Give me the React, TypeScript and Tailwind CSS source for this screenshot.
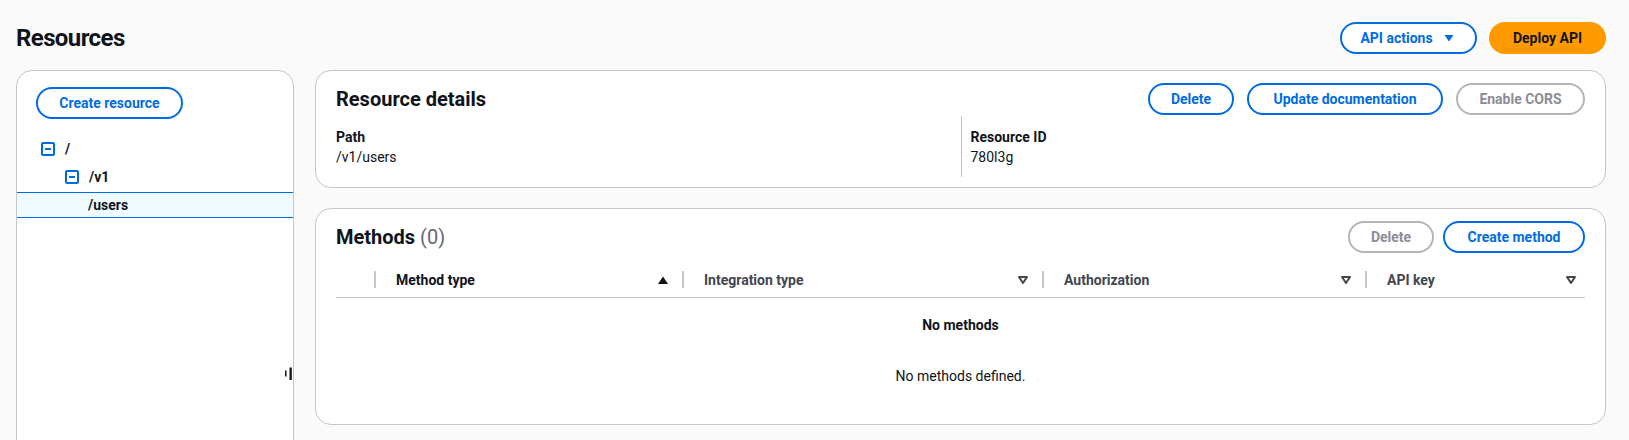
import type { ReactNode } from "react";

type Variant = "normal" | "primary" | "disabled";

const variants: Record<Variant, string> = {
  normal: "border-[#006ce0] bg-white text-[#006ce0]",
  primary: "border-[#ff9900] bg-[#ff9900] text-[#0f141a]",
  disabled: "border-[#b4b4bb] bg-white text-[#8c8c94]",
};

const Button = ({
  children,
  variant = "normal",
  width,
}: {
  children: ReactNode;
  variant?: Variant;
  width: string;
}) => (
  <button
    className={`flex h-8 shrink-0 items-center justify-center gap-2 rounded-full border-2 text-sm font-bold leading-5 ${width} ${variants[variant]}`}
  >
    {children}
  </button>
);

// small +/- box used by the resource tree
const Toggle = () => (
  <span className="flex h-[14px] w-[14px] shrink-0 items-center justify-center rounded-[2px] border-2 border-[#006ce0]">
    <span className="h-[2px] w-[6px] bg-[#006ce0]" />
  </span>
);

const SortUp = () => (
  <svg width="16" height="16" viewBox="0 0 16 16" className="shrink-0">
    <polygon points="3,12 13,12 8,4.5" fill="#0f141a" />
  </svg>
);

const SortNone = () => (
  <svg width="16" height="16" viewBox="0 0 16 16" className="shrink-0">
    <polygon
      points="4,5 12,5 8,11"
      fill="none"
      stroke="#424650"
      strokeWidth="2"
      strokeLinejoin="round"
    />
  </svg>
);

const Caret = () => (
  <svg width="16" height="16" viewBox="0 0 16 16" className="shrink-0">
    <polygon points="3.5,5 12.5,5 8,11.5" fill="#006ce0" />
  </svg>
);

const columns = [
  { label: "Method type", width: "w-[308px]", pr: "pr-[11px]", sorted: true },
  { label: "Integration type", width: "w-[360px]", pr: "pr-[11px]", sorted: false },
  { label: "Authorization", width: "w-[323px]", pr: "pr-[11px]", sorted: false },
  { label: "API key", width: "flex-1", pr: "pr-[6px]", sorted: false },
];

const App = () => {
  return (
    <div className="min-h-screen bg-[#fafafa] pl-4 pr-[23px] pt-[22px] font-[Roboto,sans-serif] text-[#0f141a]">
      {/* HEADER */}
      <header className="flex items-center justify-between">
        <h1 className="text-2xl font-bold leading-8 tracking-[-0.6px]">Resources</h1>
        <div className="flex gap-3">
          <Button width="w-[137px]">
            API actions
            <Caret />
          </Button>
          <Button width="w-[117px]" variant="primary">
            Deploy API
          </Button>
        </div>
      </header>

      <div className="mt-4 flex items-start gap-[21px]">
        {/* TREE PANEL */}
        <aside className="relative h-[400px] w-[278px] shrink-0 rounded-t-2xl border border-[#c6c6cd] bg-white pt-4">
          <div className="pl-[19px]">
            <Button width="w-[147px]">Create resource</Button>
          </div>
          <div className="mt-4 text-sm font-bold leading-5">
            <div className="flex h-7 items-center gap-[10px] pl-6">
              <Toggle />
              <span>/</span>
            </div>
            <div className="flex h-7 items-center gap-[10px] pl-12">
              <Toggle />
              <span>/v1</span>
            </div>
            <div className="mt-[1px] flex h-[26px] items-center border-y border-[#006ce0] bg-[#f0fbff] pl-[71px]">
              /users
            </div>
          </div>
          <svg width="8" height="14" viewBox="0 0 8 14" className="absolute left-[268px] top-[296px]">
            <rect x="0" y="3.5" width="1.5" height="6" fill="#0f141a" />
            <rect x="4.5" y="0.5" width="2.3" height="12.5" fill="#0f141a" />
          </svg>
        </aside>

        <main className="flex flex-1 flex-col gap-5">
          {/* RESOURCE DETAILS */}
          <section className="rounded-2xl border border-[#c6c6cd] bg-white">
            <div className="flex items-center justify-between px-5 pt-3">
              <h2 className="text-xl font-bold leading-6">Resource details</h2>
              <div className="flex gap-[13px]">
                <Button width="w-[86px]">Delete</Button>
                <Button width="w-[196px]">Update documentation</Button>
                <Button width="w-[129px]" variant="disabled">
                  Enable CORS
                </Button>
              </div>
            </div>
            <div className="mt-[1px] grid grid-cols-2 px-5 pb-[10px] text-sm leading-5">
              <div className="pb-[10px] pt-[11px]">
                <div className="font-bold">Path</div>
                <div>/v1/users</div>
              </div>
              <div className="border-l border-[#c6c6cd] pb-[10px] pl-[9px] pt-[11px]">
                <div className="font-bold">Resource ID</div>
                <div>780l3g</div>
              </div>
            </div>
          </section>

          {/* METHODS */}
          <section className="rounded-2xl border border-[#c6c6cd] bg-white">
            <div className="flex items-center justify-between px-5 pt-3">
              <h2 className="text-xl font-bold leading-6">
                Methods <span className="font-normal text-[#656871]">(0)</span>
              </h2>
              <div className="flex gap-[9px]">
                <Button width="w-[86px]" variant="disabled">
                  Delete
                </Button>
                <Button width="w-[142px]">Create method</Button>
              </div>
            </div>
            <div className="px-5">
              <div className="mt-[9px] flex h-9 items-center border-b border-[#c6c6cd] text-sm font-bold leading-5">
                <div className="w-[38px] shrink-0" />
                {columns.map((col) => (
                  <div key={col.label} className={`flex shrink-0 items-center ${col.width}`}>
                    <span className="h-[17px] w-[2px] shrink-0 bg-[#c6c6cd]" />
                    <div className={`flex flex-1 items-center justify-between pl-5 ${col.pr}`}>
                      <span className={col.sorted ? "text-[#0f141a]" : "text-[#424650]"}>{col.label}</span>
                      {col.sorted ? <SortUp /> : <SortNone />}
                    </div>
                  </div>
                ))}
              </div>
              <div className="pb-[38px] pt-[17px] text-center text-sm leading-5">
                <div className="font-bold">No methods</div>
                <div className="mt-[31px]">No methods defined.</div>
              </div>
            </div>
          </section>
        </main>
      </div>
    </div>
  );
};

export default App;
